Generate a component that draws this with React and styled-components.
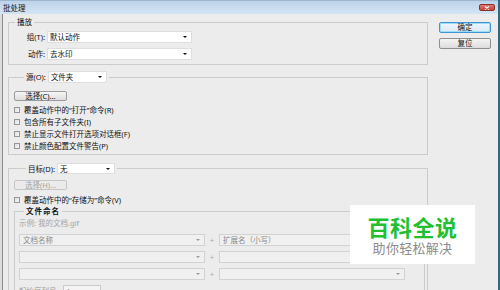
import styled, { createGlobalStyle } from 'styled-components';

const GlobalStyle = createGlobalStyle`
    html, body {
        margin: 0;
        padding: 0;
        background: #2b6b87;
    }
    body {
        font-family: "Noto Sans", "Noto Sans CJK SC", sans-serif;
        font-size: 7.5px;
        color: #111;
    }
`

const Window = styled.div`
    width: 498px;
    height: 290px;
    overflow: hidden;
    position: relative;
    display: flex;
    flex-direction: column;
    background: #dcdcdc;
`

const TitleBar = styled.div`
    height: 14px;
    flex: none;
    display: flex;
    align-items: center;
    justify-content: space-between;
    padding: 0 3px 0 3px;
    background: linear-gradient(#bdd3ea, #d4e4f3);
    border-top: 1px solid #9fb6cf;
    box-sizing: border-box;
    color: #111;
    line-height: 10px;
`

const CloseButton = styled.div`
    width: 16px;
    height: 7px;
    box-sizing: border-box;
    border: 1px solid #8e3128;
    border-radius: 2px;
    background: linear-gradient(#dc7a70, #c2463b);
    display: flex;
    align-items: center;
    justify-content: center;
`

const Frame = styled.div`
    flex: 1;
    display: flex;
    margin-left: 2px;
    border-left: 1px solid #8c8c8c;
    background: #ececec;
    padding-left: 5px;
    min-height: 0;
`

const MainColumn = styled.div`
    width: 420px;
    flex: none;
    display: flex;
    flex-direction: column;
`

const ButtonColumn = styled.div`
    width: 52px;
    margin-left: 11px;
    padding-top: 8px;
    display: flex;
    flex-direction: column;
    gap: 5px;
`

const DialogButton = styled.div`
    height: 11px;
    box-sizing: border-box;
    border: 1px solid ${({ $default }) => ($default ? '#3d95d4' : '#8f8f8f')};
    border-radius: 2px;
    background: ${({ $default }) =>
        $default ? 'linear-gradient(#eef6fc, #d9e9f5)' : 'linear-gradient(#f4f4f4, #dcdcdc)'};
    box-shadow: ${({ $default }) => ($default ? 'inset 0 0 0 1px #9ddcf7' : 'none')};
    display: flex;
    align-items: center;
    justify-content: center;
    line-height: 9px;
    color: #111;
`

const Group = styled.fieldset`
    margin: ${({ $mt }) => $mt}px 0 0 0;
    padding: 0;
    border: 1px solid #cbcbcb;
    min-width: 0;
    flex: ${({ $grow }) => ($grow ? 1 : 'none')};
`

const Legend = styled.legend`
    margin-left: ${({ $ml }) => $ml}px;
    padding: 0 2px;
    display: flex;
    align-items: center;
    gap: 2px;
    line-height: 10px;
    font-weight: ${({ $bold }) => ($bold ? 700 : 400)};
    letter-spacing: ${({ $bold }) => ($bold ? '1px' : '0')};
    color: #111;
`

const GroupBody = styled.div`
    display: flex;
    flex-direction: column;
    padding: ${({ $pad }) => $pad};
`

const FieldRow = styled.div`
    display: flex;
    align-items: center;
    gap: 2px;
    height: 12px;
    margin-top: ${({ $mt }) => $mt || 0}px;
`

const FieldLabel = styled.span`
    width: ${({ $w }) => $w}px;
    text-align: right;
    white-space: nowrap;
    line-height: 10px;
`

const Select = styled.div`
    width: ${({ $w }) => $w}px;
    height: ${({ $h }) => $h || 12}px;
    box-sizing: border-box;
    background: #fff;
    border: 1px solid #dedede;
    display: flex;
    align-items: center;
    padding: 0 4px 0 2px;
    line-height: 10px;
    color: #111;
`

const Arrow = styled.span`
    margin-left: auto;
    width: 0;
    height: 0;
    border-left: 2px solid transparent;
    border-right: 2px solid transparent;
    border-top: 2px solid ${({ $muted }) => ($muted ? '#9a9a9a' : '#111')};
`

const PushButton = styled.div`
    width: 53px;
    height: 10px;
    box-sizing: border-box;
    border: 1px solid ${({ $disabled }) => ($disabled ? '#c6c6c6' : '#9b9b9b')};
    border-radius: 2px;
    background: ${({ $disabled }) =>
        $disabled ? '#ebebeb' : 'linear-gradient(#f6f6f6, #dedede)'};
    color: ${({ $disabled }) => ($disabled ? '#a3a3a3' : '#111')};
    display: flex;
    align-items: center;
    justify-content: center;
    line-height: 8px;
`

const CheckRow = styled.div`
    display: flex;
    align-items: center;
    gap: 4px;
    height: 12px;
    margin-top: ${({ $mt }) => $mt || 0}px;
    line-height: 10px;
    white-space: nowrap;
`

const CheckBox = styled.span`
    width: 6px;
    height: 6px;
    box-sizing: border-box;
    border: 1px solid #979797;
    background: linear-gradient(135deg, #dedede, #f8f8f8);
    flex: none;
`

const Example = styled.div`
    color: #a5a5a5;
    line-height: 10px;
    margin-top: 2px;
`

const ComboRow = styled.div`
    display: flex;
    align-items: center;
    height: 12px;
    margin-top: ${({ $mt }) => $mt}px;
`

const Combo = styled.div`
    width: 186px;
    height: 12px;
    box-sizing: border-box;
    background: #f0f0f0;
    border: 1px solid #d2d2d2;
    display: flex;
    align-items: center;
    padding: 0 4px 0 3px;
    color: #8a8a8a;
    line-height: 10px;
`

const Plus = styled.span`
    width: 14px;
    text-align: center;
    color: #a8a8a8;
    line-height: 10px;
`

const SerialRow = styled.div`
    display: flex;
    align-items: center;
    gap: 4px;
    margin-top: 5px;
    color: #9a9a9a;
    line-height: 10px;
`

const SerialBox = styled.div`
    width: 38px;
    height: 12px;
    box-sizing: border-box;
    border: 1px solid #c9c9c9;
    background: #f4f4f4;
    padding-left: 3px;
    line-height: 10px;
`

const Watermark = styled.div`
    position: absolute;
    left: 350px;
    top: 205px;
    width: 125px;
    height: 59px;
    background: #fff;
    display: flex;
    flex-direction: column;
    align-items: center;
    justify-content: center;
    gap: 2px;
    font-family: "Noto Sans CJK SC", sans-serif;
`

const BrandName = styled.div`
    font-size: 22px;
    line-height: 24px;
    font-weight: 700;
    color: #22bf30;
    letter-spacing: 0.5px;
`

const BrandSlogan = styled.div`
    font-size: 13px;
    line-height: 15px;
    color: #8b8b8b;
    letter-spacing: 0.3px;
`

const sourceOptions = [
    '覆盖动作中的“打开”命令(R)',
    '包含所有子文件夹(I)',
    '禁止显示文件打开选项对话框(F)',
    '禁止颜色配置文件警告(P)',
]

const namingRows = [
    ['文档名称', '扩展名（小写）'],
    ['', ''],
    ['', ''],
]

const App = () => {
    return (
        <>
            <GlobalStyle />
            <Window>
                <TitleBar>
                    <span>批处理</span>
                    <CloseButton>
                        <svg width="6" height="4" viewBox="0 0 6 4">
                            <path d="M1 0.5 L5 3.5 M5 0.5 L1 3.5" stroke="#fff" strokeWidth="1.1" />
                        </svg>
                    </CloseButton>
                </TitleBar>
                <Frame>
                    <MainColumn>
                        <Group $mt={3}>
                            <Legend $ml={6}>播放</Legend>
                            <GroupBody $pad="4px 0 4px 0">
                                <FieldRow>
                                    <FieldLabel $w={36}>组(T):</FieldLabel>
                                    <Select $w={145}>默认动作<Arrow /></Select>
                                </FieldRow>
                                <FieldRow $mt={5}>
                                    <FieldLabel $w={36}>动作:</FieldLabel>
                                    <Select $w={145}>去水印<Arrow /></Select>
                                </FieldRow>
                            </GroupBody>
                        </Group>

                        <Group $mt={6}>
                            <Legend $ml={15}>
                                <span>源(O):</span>
                                <Select $w={59}>文件夹<Arrow /></Select>
                            </Legend>
                            <GroupBody $pad="8px 0 2px 5px">
                                <PushButton>选择(C)...</PushButton>
                                {sourceOptions.map((o, i) => (
                                    <CheckRow key={o} $mt={i === 0 ? 3 : 0}>
                                        <CheckBox />
                                        {o}
                                    </CheckRow>
                                ))}
                            </GroupBody>
                        </Group>

                        <Group $mt={8} $grow>
                            <Legend $ml={17}>
                                <span>目标(D):</span>
                                <Select $w={58} $h={11}>无<Arrow /></Select>
                            </Legend>
                            <GroupBody $pad="6px 2px 0 5px">
                                <PushButton $disabled>选择(H)...</PushButton>
                                <CheckRow $mt={4}>
                                    <CheckBox />
                                    覆盖动作中的“存储为”命令(V)
                                </CheckRow>
                                <Group $mt={0}>
                                    <Legend $ml={9} $bold>文件命名</Legend>
                                    <GroupBody $pad="0 0 6px 4px">
                                        <Example>示例: 我的文档.gif</Example>
                                        {namingRows.map(([a, b], i) => (
                                            <ComboRow key={i} $mt={i === 0 ? 6 : 5}>
                                                <Combo>{a}<Arrow $muted /></Combo>
                                                <Plus>+</Plus>
                                                <Combo>{b}<Arrow $muted /></Combo>
                                            </ComboRow>
                                        ))}
                                        <SerialRow>
                                            <span>起始序列号:</span>
                                            <SerialBox>1</SerialBox>
                                        </SerialRow>
                                    </GroupBody>
                                </Group>
                            </GroupBody>
                        </Group>
                    </MainColumn>
                    <ButtonColumn>
                        <DialogButton $default>确定</DialogButton>
                        <DialogButton>复位</DialogButton>
                    </ButtonColumn>
                </Frame>
                <Watermark>
                    <BrandName>百科全说</BrandName>
                    <BrandSlogan>助你轻松解决</BrandSlogan>
                </Watermark>
            </Window>
        </>
    )
}

export default App;
